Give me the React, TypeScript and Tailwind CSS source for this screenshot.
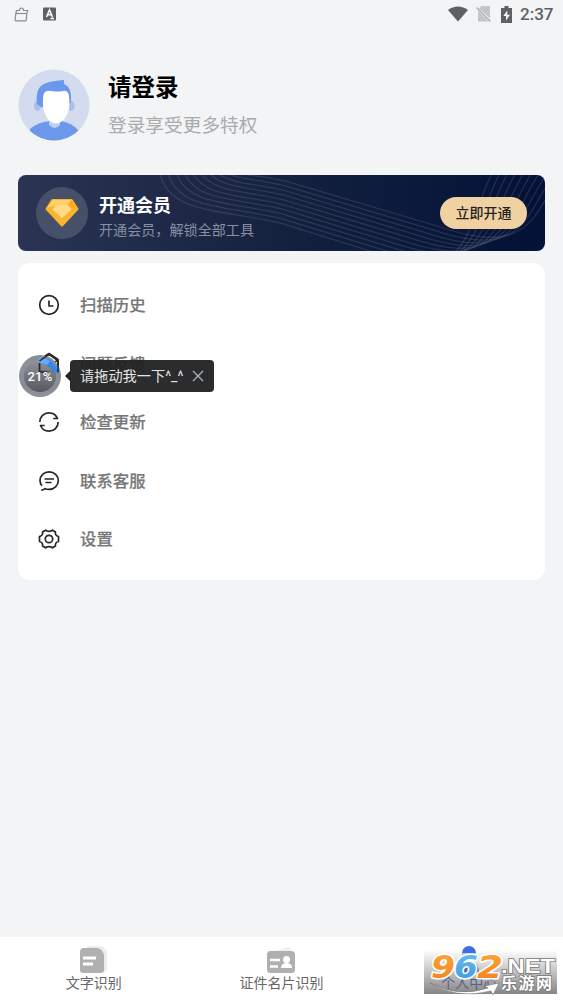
import type { ReactNode } from "react";

const menuItems: { label: string; icon: ReactNode }[] = [
  {
    label: "扫描历史",
    icon: (
      <>
        <circle cx="11" cy="11" r="9.3" />
        <path d="M11 6.5V12h4.5" />
      </>
    ),
  },
  {
    label: "问题反馈",
    icon: (
      <>
        <path d="M2 7.5 11 1.5l9 6V19H2z" />
        <path d="m2 8 9 6 9-6" />
      </>
    ),
  },
  {
    label: "检查更新",
    icon: (
      <>
        <path d="M1.8 11C1.800 5.800 6 1.800 11 1.800c3.800 0 7 2.200 8.500 5.700h-4.200" />
        <path d="M20.200 11c0 5.200-4.200 9.200-9.200 9.200-3.800 0-7-2.200-8.500-5.700h4.200" />
      </>
    ),
  },
  {
    label: "联系客服",
    icon: (
      <>
        <path d="M3.2 20.200c1.800 0 2.700-.6 3.800-1.500 1.300.5 2.600.7 4 .7 5.200 0 9.300-3.900 9.300-8.800s-4-8.800-9.200-8.800S2 5.800 2 10.500c0 2 .7 3.800 2 5.300" />
        <path d="M6.500 9h9.500M7.500 12.500h6" />
      </>
    ),
  },
  {
    label: "设置",
    icon: (
      <>
        <path d="M7.500 2.200c1.500 1.600 5.500 1.600 7 0l3 1.800c-.6 2.200.6 4 3 4.500v5c-2.400.5-3.600 2.300-3 4.500l-3 1.800c-1.500-1.600-5.500-1.600-7 0l-3-1.800c.6-2.200-.6-4-3-4.500v-5c2.400-.5 3.600-2.300 3-4.500z" />
        <circle cx="11" cy="11" r="3.700" />
      </>
    ),
  },
];

const waves = Array.from({ length: 10 }, (_, i) => i / 9);

function StatusBar() {
  return (
    <div className="flex h-7 items-center justify-between pl-3.5 pr-2.5 text-[#5f6062]">
      <div className="flex items-center gap-3.5">
        <svg width="15" height="15" viewBox="0 0 15 15" fill="none" stroke="#8b8c8e" strokeWidth="1.2">
          <path d="M2.500 3.500h3q0-2.500 2-2.500t2 2.500h4.200l-1 3-.4 6.300q0 1-1 1H2q-1 0-.9-1L1.800 6.500z" />
          <path d="M2 6.500h10.500" />
        </svg>
        <svg width="13" height="14" viewBox="0 0 13 14">
          <rect y=".5" width="13" height="13" rx="1" fill="#5f6062" />
          <path d="m3.500 10 3-7 3 7M4.500 7.700h4M7.500 11.500H11" fill="none" stroke="#fff" strokeWidth="1.500" />
        </svg>
      </div>
      <div className="flex items-center">
        <svg width="20" height="16" viewBox="0 0 20 16" fill="#5f6062">
          <path d="M0 4C6-.7 14-.7 20 4L10 15.500z" />
        </svg>
        <svg className="ml-2" width="15" height="16" viewBox="0 0 15 16">
          <path d="M5.500 0H14v12.500L3 2.500zM2 4.500 13 15.500H2z" fill="#c3c5c7" />
          <path d="m.5 1.500 14 14" stroke="#a9abad" strokeWidth="1.200" />
        </svg>
        <svg className="ml-2.5" width="11" height="17" viewBox="0 0 11 17">
          <path d="M3.500 0h4v2H11v15H0V2h3.500z" fill="#5f6062" />
          <path d="M6.300 4.500 2.300 10h2.700v4.500L9 8.800H6.300z" fill="#f3f5f7" />
        </svg>
        <span className="ml-2 w-[33px] whitespace-nowrap font-[Roboto,sans-serif] text-[17px] font-medium leading-7">2:37</span>
      </div>
    </div>
  );
}

function Avatar() {
  return (
    <svg width="72" height="72" viewBox="0 0 72 72">
      <defs>
        <clipPath id="avatar">
          <circle cx="36" cy="36" r="35.500" />
        </clipPath>
      </defs>
      <g clipPath="url(#avatar)">
        <rect width="72" height="72" fill="#d2dcee" />
        <path d="M12 60q8-7 20-8h10q12 2 18 9v12H12z" fill="#6b97ed" />
        <path d="M31 50h11v6q-5 6-11 0z" fill="#c2cfe8" />
        <ellipse cx="19.500" cy="37" rx="3.500" ry="5" fill="#a9bfe9" />
        <ellipse cx="53" cy="37" rx="3.500" ry="5" fill="#a9bfe9" />
        <path d="M19 35q-2-14 5-19 6-4 22-5v4q8 3 7 18l-4 5H23z" fill="#6b97ed" />
        <path d="M27 23q3-2 6-1 6 1 12 0 5-1 6 5 2 14-4 22-9 11-18 0-5-8-4-19 0-5 2-7" fill="#fff" />
      </g>
    </svg>
  );
}

function VipBanner() {
  return (
    <div className="relative mx-[18px] mt-[34px] flex h-[76px] items-center overflow-hidden rounded-lg bg-linear-to-r from-[#2b3553] via-[#14213f] to-[#041138] px-[18px]">
      <svg className="absolute inset-0" width="527" height="76" viewBox="0 0 527 76" fill="none" stroke="#8b8f94" strokeOpacity=".22" strokeWidth="1.300">
        {waves.map(t => (
          <path
            key={t}
            d={`M${142 + t * 73} -2C${150 + t * 85} ${38 - t * 37} ${200 + t * 40} ${34 - t * 34} ${262 + t * 5} ${48 - t * 42}L${352 + t * 67} ${76 - t * 25}C${395 + t * 60} ${90 - t * 27} ${425 + t * 55} ${92 - t * 25} ${440 + t * 60} ${74 - t * 18}S${456 + t * 68} ${36 - t * 10} ${474 + t * 71} -2`}
          />
        ))}
      </svg>
      <div className="relative flex size-[52px] items-center justify-center rounded-full bg-[#465069]">
        <svg width="34" height="28" viewBox="0 0 34 28">
          <path d="M8 0h18q1 0 2 1l5 8q1 1 0 2L18 27q-1 1-2 0L1 11q-1-1 0-2l5-8q1-1 2-1" fill="#fbb42e" />
          <path d="M8 1 2 9l9-3zM11 6h12l3-5H8z" fill="#ffd166" />
          <path d="m23 6 9 4-5-9z" fill="#f9a91c" />
          <path d="M11 6h12l3.500 4.500L17 19l-9.500-8.500z" fill="#ffda87" />
        </svg>
      </div>
      <div className="relative ml-[11px] flex-1 pt-[10px]">
        <h2 className="text-[18px] font-bold leading-6 text-white">开通会员</h2>
        <p className="text-[14.100px] leading-6 text-[#8990a3]">开通会员，解锁全部工具</p>
      </div>
      <button className="relative h-8 w-[87px] rounded-full bg-[#efd1a2] text-[14px] font-medium text-[#24211e]">立即开通</button>
    </div>
  );
}

function DragBubble() {
  return (
    <div className="absolute left-[19px] top-[355px] flex items-center">
      <div className="relative flex size-[42px] items-center justify-center rounded-full border-[5px] border-[#8b909a]/95 bg-linear-to-b from-[#85888d]/90 to-[#4d5057]/95 font-[Roboto,sans-serif] text-[13px] font-medium tracking-[.3px] text-white">
        <svg className="absolute -left-[5px] -top-[5px]" width="42" height="42" viewBox="0 0 42 42">
          <path d="M20 3q15-1 20 16l-5-2Q29 8 20 8z" fill="#3186ef" />
          <path d="M20 3q7 0 11 3l-3 4q-4-2-8-2z" fill="#5fadff" />
          <path d="M20.500 8v9H28M20.500 6 30-.5l9 6.500v11" fill="none" stroke="#25272b" strokeWidth="1.500" />
        </svg>
        <span className="relative pt-px">21%</span>
      </div>
      <svg className="ml-1" width="5" height="10" viewBox="0 0 5 10">
        <path d="M5 0v10L0 5z" fill="#252627" />
      </svg>
      <div className="flex h-8 w-[144px] items-center rounded bg-[#202122]/95 pl-[10px] text-[#e5e5e5]">
        <span className="w-[104px] whitespace-nowrap pt-px font-['Roboto','Noto_Sans_CJK_SC',sans-serif] text-[14.200px]">请拖动我一下^_^</span>
        <svg className="ml-2 shrink-0" width="12" height="12" viewBox="0 0 12 12" stroke="#b5b5b5" strokeWidth="1.200">
          <path d="m1 1 10 10M11 1 1 11" />
        </svg>
      </div>
    </div>
  );
}

function Watermark() {
  return (
    <div className="absolute left-[424px] top-[950px] h-11 w-[133px] bg-linear-to-b from-[#707070]/0 to-[#707070]/85">
      <svg className="overflow-visible" width="133" height="44" viewBox="0 0 133 44" fontFamily="'Liberation Sans', 'Noto Sans CJK SC', sans-serif" fontWeight="bold">
        <defs>
          <linearGradient id="orange" x2="0" y2="1">
            <stop stopColor="#ffa83a" />
            <stop offset="1" stopColor="#f07f1e" />
          </linearGradient>
          <linearGradient id="blue" x2="0" y2="1">
            <stop stopColor="#6cc0f2" />
            <stop offset="1" stopColor="#3a97de" />
          </linearGradient>
        </defs>
        <path d="M6 33q28 15 58 5l-3-2 14-3-6 12-2-4Q33 50 6 33" fill="#fff" stroke="#777" strokeWidth=".6" />
        <g fontFamily="'DejaVu Sans', sans-serif" fontSize="32" fontStyle="italic" stroke="#fff" strokeWidth="3" paintOrder="stroke" strokeLinejoin="round">
          <text x="7" y="28" fill="url(#orange)" textLength="24" lengthAdjust="spacingAndGlyphs">9</text>
          <text x="30" y="28" fill="url(#blue)" textLength="24" lengthAdjust="spacingAndGlyphs">6</text>
          <text x="53" y="28" fill="url(#orange)" textLength="26" lengthAdjust="spacingAndGlyphs">2</text>
        </g>
        <g fill="#fff" stroke="#777" strokeWidth="1.500" paintOrder="stroke">
          <text x="77" y="23" fontSize="20" textLength="54" lengthAdjust="spacingAndGlyphs">.NET</text>
          <text x="77" y="39" fontSize="16" textLength="51">乐游网</text>
        </g>
      </svg>
    </div>
  );
}

function TabBar() {
  return (
    <nav className="grid h-[63px] grid-cols-3 bg-white text-[14px] leading-5 text-[#666]">
      <div className="flex flex-col items-center pt-2">
        <svg width="28" height="29" viewBox="0 0 28 29">
          <path d="M7 1h14q6 3 6 7v15q0 4-4 4H7z" fill="#ececec" />
          <path d="M4 3h14q5 2 6 7v15q0 3-3 3H3q-3 0-3-3V7q0-4 4-4" fill="#b0b0b0" />
          <path d="M3 13h13M3 19h10" stroke="#fff" strokeWidth="3" />
        </svg>
        <span className="-mt-px">文字识别</span>
      </div>
      <div className="flex flex-col items-center pt-2">
        <svg width="30" height="29" viewBox="0 0 30 29">
          <path d="m6 7 17-5 3 5z" fill="#ececec" />
          <rect x="1" y="6" width="28" height="22" rx="3.500" fill="#b0b0b0" />
          <path d="M4 15h10M4 21.500h8" stroke="#fff" strokeWidth="2.600" />
          <circle cx="20.500" cy="14.500" r="3.500" fill="#fff" />
          <path d="M15 23q0-5 5.500-5t5.500 5z" fill="#fff" />
        </svg>
        <span className="-mt-px">证件名片识别</span>
      </div>
      <div className="flex flex-col items-center pt-2 text-[#1747b5]">
        <svg width="28" height="29" viewBox="0 0 28 29">
          <circle cx="14" cy="8" r="7" fill="#3e6de4" />
          <path d="M7 8h14q0 7-7 7T7 8" fill="#bdd0ff" />
          <path d="M4 28q0-11 10-11t10 11z" fill="#3e6de4" />
        </svg>
        <span className="-mt-px">个人中心</span>
      </div>
    </nav>
  );
}

export default function App() {
  return (
    <div className="relative flex h-[1000px] w-[563px] flex-col overflow-hidden bg-[#f2f4f6] font-['Liberation_Sans','Noto_Sans_CJK_SC',sans-serif]">
      <StatusBar />

      {/* Login header */}
      <header className="mt-[41px] flex h-[72px] items-center pl-[18px]">
        <Avatar />
        <div className="ml-[18px] pt-1">
          <h1 className="text-[23.500px] font-bold leading-[38px] text-black">请登录</h1>
          <p className="text-[18.700px] leading-[38px] text-[#a9abad]">登录享受更多特权</p>
        </div>
      </header>

      <VipBanner />

      {/* Menu */}
      <div className="mx-[18px] mt-3 h-[317px] rounded-xl bg-white pt-[12.500px]">
        {menuItems.map(item => (
          <div key={item.label} className="flex h-[58.600px] items-center pl-5">
            <svg width="22" height="22" viewBox="0 0 22 22" fill="none" stroke="#252525" strokeWidth="1.700" strokeLinejoin="round">
              {item.icon}
            </svg>
            <span className="ml-5 pt-px text-[16.400px] font-medium text-[#777] [-webkit-text-stroke:.2px_#777]">{item.label}</span>
          </div>
        ))}
      </div>

      <div className="flex-1" />
      <TabBar />
      <DragBubble />
      <Watermark />
    </div>
  );
}
